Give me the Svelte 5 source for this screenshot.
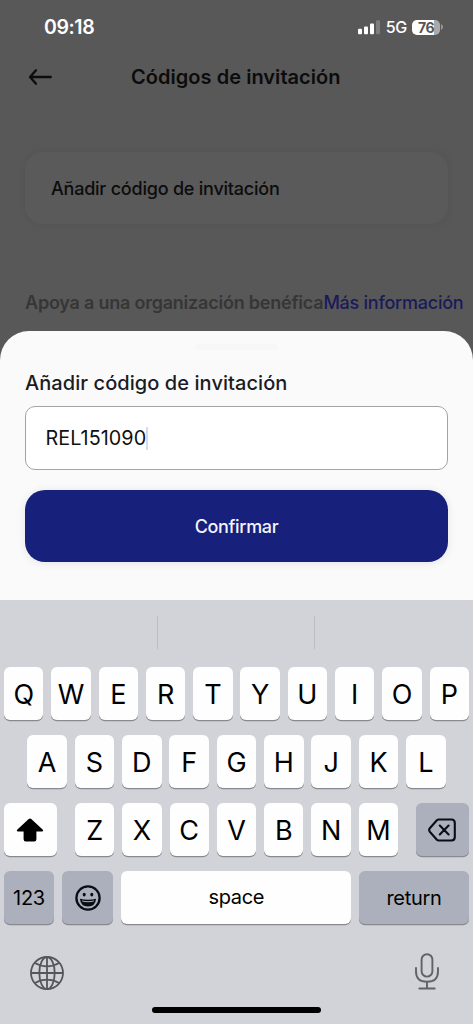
<script>
  const topRow = [...'QWERTYUIOP'];
  const homeRow = [...'ASDFGHJKL'];
  const lowerRow = [...'ZXCVBNM'];
</script>

<main class="screen">
  <header class="status">
    <span class="time">09:18</span>
    <div class="indicators">
      <svg width="22" height="15" viewBox="0 0 22 15">
        <g fill="#fff">
          <rect x="0" y="8.8" width="4" height="5.4" rx="1" />
          <rect x="6" y="6.4" width="4" height="7.8" rx="1" />
          <rect x="12" y="3.4" width="4" height="10.8" rx="1" />
          <rect x="18" y="0.2" width="4" height="14" rx="1" fill="#7d7d7d" />
        </g>
      </svg>
      <span class="network">5G</span>
      <span class="battery"><span class="level">76</span></span>
      <svg class="nub" width="2" height="6" viewBox="0 0 2 6"><path d="M0 0Q2 1 2 3T0 6Z" fill="#9a9a9a" /></svg>
    </div>
  </header>

  <nav class="navbar">
    <svg width="24" height="18" viewBox="0 0 24 18" fill="none" stroke="#0d0d0d" stroke-width="2.3" stroke-linecap="round" stroke-linejoin="round">
      <path d="M22.8 9H2.4M8 2.3L2 9L8 15.7" />
    </svg>
    <h1>Códigos de invitación</h1>
  </nav>

  <section class="card"><span>Añadir código de invitación</span></section>
  <p class="support"><span class="cause">Apoya a una organización benéfica</span><span class="more">Más información</span></p>

  <section class="sheet">
    <div class="handle"></div>
    <h2><span>Añadir código de invitación</span></h2>
    <div class="field"><span>REL151090</span><i class="caret"></i></div>
    <button class="confirm">Confirmar</button>
  </section>

  <section class="keyboard">
    <div class="suggestions"><i></i><i></i><i></i></div>
    <div class="row">
      {#each topRow as k}<div class="key">{k}</div>{/each}
    </div>
    <div class="row home">
      {#each homeRow as k}<div class="key">{k}</div>{/each}
    </div>
    <div class="row spread">
      <div class="key wide">
        <svg width="28" height="24" viewBox="0 0 28 24"><path d="M12.7 1.1Q14 0 15.3 1.1L26.6 11.6Q28.1 13.4 25.8 13.6H20.4V21.2Q20.4 23.4 18.2 23.4H9.8Q7.6 23.4 7.6 21.2V13.6H2.2Q-.1 13.4 1.4 11.6Z" /></svg>
      </div>
      <div class="letters">
        {#each lowerRow as k}<div class="key">{k}</div>{/each}
      </div>
      <div class="key wide grey">
        <svg width="28" height="24" viewBox="0 0 28 24" fill="none" stroke="#090d14" stroke-width="2.1" stroke-linecap="round" stroke-linejoin="round">
          <path d="M10.8 1.5H23.4Q26.8 1.5 26.8 5V19Q26.8 22.5 23.4 22.5H10.8Q9.7 22.5 8.9 21.7L2 14Q.3 12 2 10L8.9 2.3Q9.7 1.5 10.8 1.5ZM11.8 7.6L20.6 16.4M20.6 7.6L11.8 16.4" />
        </svg>
      </div>
    </div>
    <div class="row functions">
      <div class="key grey small numbers">123</div>
      <div class="key grey face">
        <svg width="26" height="26" viewBox="0 0 26 26">
          <circle cx="13" cy="13" r="11.6" fill="none" stroke="#090d14" stroke-width="2.3" />
          <ellipse cx="9.2" cy="9.6" rx="1.5" ry="1.9" fill="#090d14" />
          <ellipse cx="16.8" cy="9.6" rx="1.5" ry="1.9" fill="#090d14" />
          <path d="M4.9 13.7Q13 16 21.1 13.7Q20.4 21.4 13 21.4T4.9 13.7Z" fill="#090d14" />
          <path d="M6.8 15.4Q13 16.9 19.2 15.4L18.7 16.6Q13 18 7.3 16.6Z" fill="#abb0bc" />
        </svg>
      </div>
      <div class="key small space">space</div>
      <div class="key grey small return">return</div>
    </div>
    <footer>
      <svg width="34" height="34" viewBox="0 0 34 34" fill="none" stroke="#55565c" stroke-width="1.8">
        <circle cx="17" cy="17" r="16" />
        <ellipse cx="17" cy="17" rx="7.7" ry="16" />
        <path d="M17 1V33M1 17H33M5 7Q10.5 10.3 17 10.3T29 7M5 27Q10.5 23.7 17 23.7T29 27" />
      </svg>
      <svg width="24" height="37" viewBox="0 0 24 37" fill="none" stroke="#606268" stroke-width="1.9" stroke-linecap="round">
        <rect x="6.6" y="1.2" width="10.8" height="22.4" rx="5.4" />
        <path d="M1 15V18.5Q1 28.8 12 28.8T23 18.5V15M12 28.8V35.3M4.3 35.5H19.7" />
      </svg>
    </footer>
    <div class="home-bar"></div>
  </section>
</main>

<style>
  :global(body) { margin: 0; background: #595959; }
  .screen {
    width: 473px; height: 1024px; overflow: hidden;
    display: flex; flex-direction: column;
    background: #585858; font-family: Inter, sans-serif; color: #111;
    white-space: nowrap;
  }
  .status {
    height: 54px; flex: none; box-sizing: border-box;
    padding: 0 30px 0 44px; display: flex; justify-content: space-between; align-items: center; color: #fff;
  }
  .time { font-size: 19.5px; font-weight: 600; letter-spacing: -.4px; }
  .indicators { display: flex; align-items: center; }
  .network { font-size: 16px; font-weight: 500; margin: 0 5.5px 0 6px; letter-spacing: -.6px; }
  .battery {
    width: 28px; height: 15px; border-radius: 5px; overflow: hidden;
    background: linear-gradient(90deg, #fff 77%, #aaa 77%);
    display: flex; align-items: center; justify-content: center;
  }
  .level { font-size: 14px; font-weight: 700; color: #555; letter-spacing: -.5px; }
  .nub { margin-left: 1px; }
  .navbar { height: 46px; flex: none; display: grid; grid-template-columns: 131px 1fr; align-items: center; }
  .navbar svg { margin-left: 28px; }
  h1 { margin: 0; font-size: 20px; font-weight: 600; line-height: 24px; color: #0c0c0c; letter-spacing: .04px; }
  .card {
    flex: none; height: 72px; margin: 52px 25px 0; padding-left: 26px; box-sizing: border-box;
    display: flex; align-items: center; border-radius: 18px; background: #5a5a5a;
    box-shadow: 0 0 10px rgba(0, 0, 0, .06);
    font-size: 18px; font-weight: 500; letter-spacing: -.22px; color: #0c0c0c;
  }
  .support { flex: none; margin: 66px 0 0 25px; height: 41px; line-height: 26px; font-size: 18px; display: flex; }
  .cause { font-weight: 600; letter-spacing: -.22px; color: #363636; }
  .more { font-weight: 500; letter-spacing: -.25px; color: #191b58; }
  .sheet {
    flex: none; height: 269px; box-sizing: border-box; padding: 13px 25px 0;
    background: #fafafa; border-radius: 29px 29px 0 0; display: flex; flex-direction: column;
  }
  .handle { width: 83px; height: 6px; border-radius: 3px; background: #f7f7f7; align-self: center; flex: none; }
  h2 { margin: 20px 0 10px; font-size: 20px; line-height: 26px; font-weight: 500; letter-spacing: .07px; color: #1c1c1e; flex: none; }
  .field {
    height: 64px; flex: none; box-sizing: border-box; padding-left: 19.5px; display: flex; align-items: center;
    border: 1px solid #a4a4a4; border-radius: 10px; background: #fff; font-size: 19.8px; letter-spacing: .05px; color: #111;
  }
  .caret { width: 2px; height: 23px; background: #d3daf3; }
  .confirm {
    height: 72px; flex: none; margin: 20px 0 0; padding-top: 2px; border: 0; border-radius: 20px;
    background: #17207a; color: #f4f4fc; font: 500 18px Inter, sans-serif; letter-spacing: -.35px;
    box-shadow: 0 1px 8px rgba(40, 40, 100, .1);
  }
  .keyboard { flex: none; height: 424px; background: #d1d3d9; display: flex; flex-direction: column; color: #000; }
  .suggestions { height: 33px; flex: none; margin: 16px 0 18px; display: grid; grid-template-columns: 157.5px 157.5px 1fr; }
  .suggestions i { border-right: 1px solid #bbbdc3; }
  .suggestions i:last-child { border: 0; }
  .row { height: 53px; flex: none; margin-bottom: 15px; padding: 0 4px; display: grid; grid-template-columns: repeat(10, 1fr); gap: 7.8px; }
  .home { padding: 0 27.3px; grid-template-columns: repeat(9, 1fr); }
  .spread { display: flex; justify-content: space-between; gap: 0; }
  .letters { display: grid; grid-template-columns: repeat(7, 39.4px); gap: 7.9px; }
  .key {
    display: flex; align-items: center; justify-content: center; border-radius: 6px; background: #fefefe;
    box-shadow: 0 1.3px 0 #898a8d; font-size: 27px; font-weight: 380; box-sizing: border-box; padding-top: 2px;
  }
  .wide { width: 53px; padding: 0; }
  .wide svg { margin-right: 1px; }
  .grey { background: #abb0bc; }
  .functions { grid-template-columns: 50px 51.5px 230px 109.7px; gap: 7.9px; }
  .small { font-size: 20px; font-weight: 400; letter-spacing: -.3px; }
  .numbers { padding-top: 1px; }
  .face { padding: 0; }
  .return { padding-top: 1px; }
  .space { padding-bottom: 2px; padding-top: 0; letter-spacing: -.4px; }
  footer { height: 37px; flex: none; margin: 14px 34px 0 30px; display: flex; justify-content: space-between; align-items: center; }
  footer svg:first-child { margin-top: 3px; }
  .home-bar { width: 169px; height: 6px; margin: 17px auto 0; border-radius: 3px; background: #000; flex: none; }
</style>
